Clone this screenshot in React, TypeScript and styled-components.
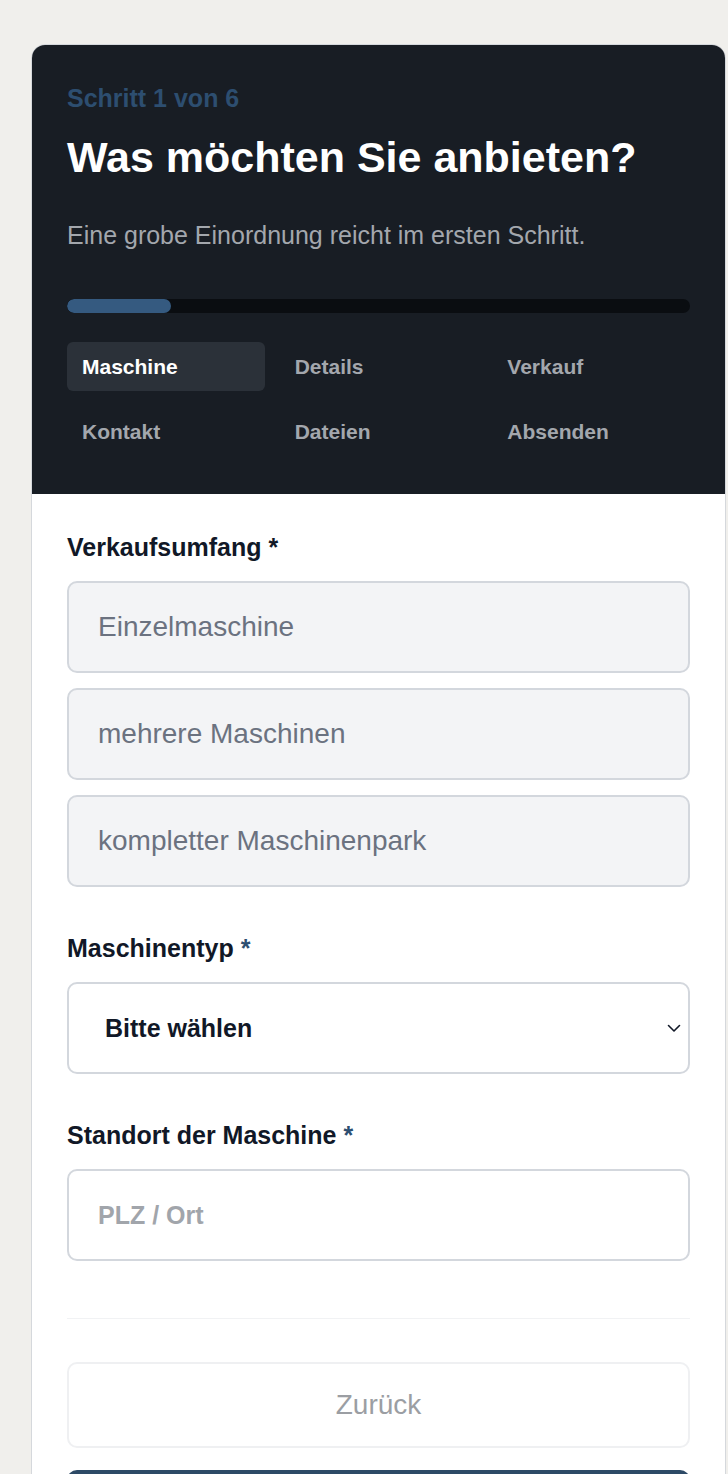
import * as React from 'react';
import styled, { createGlobalStyle } from 'styled-components';

const GlobalStyle = createGlobalStyle`
  html, body {
    margin: 0;
    padding: 0;
    background: #f0efec;
    font-family: "Liberation Sans", Arial, sans-serif;
  }
  * { box-sizing: border-box; }
`;

const steps = ['Maschine', 'Details', 'Verkauf', 'Kontakt', 'Dateien', 'Absenden'];
const scopes = ['Einzelmaschine', 'mehrere Maschinen', 'kompletter Maschinenpark'];

export default function App() {
  return (
    <>
      <GlobalStyle />
      <Page>
        <Card>
          <Header>
            <StepLabel>Schritt 1 von 6</StepLabel>
            <Title>Was möchten Sie anbieten?</Title>
            <Subtitle>Eine grobe Einordnung reicht im ersten Schritt.</Subtitle>
            <Track>
              <Fill style={{ width: `${(1 / 6) * 100}%` }} />
            </Track>
            <Tabs>
              {steps.map((s, i) => (
                <Tab key={s} active={i === 0}>
                  {s}
                </Tab>
              ))}
            </Tabs>
          </Header>

          <Body>
            <Field>
              <Label>Verkaufsumfang *</Label>
              <Options>
                {scopes.map(s => (
                  <Option key={s}>{s}</Option>
                ))}
              </Options>
            </Field>

            <Field>
              <Label>
                Maschinentyp <Req>*</Req>
              </Label>
              <Select>
                <span>Bitte wählen</span>
                <svg width="14" height="9" viewBox="0 0 14 9" fill="none">
                  <path d="M1.5 1.5l5.5 5.5 5.5-5.5" stroke="#111827" strokeWidth="1.6" strokeLinecap="round" strokeLinejoin="round" />
                </svg>
              </Select>
            </Field>

            <Field>
              <Label>
                Standort der Maschine <Req>*</Req>
              </Label>
              <Input placeholder="PLZ / Ort" />
            </Field>

            <Divider />

            <Footer>
              <BackButton>Zurück</BackButton>
              <NextButton />
            </Footer>
          </Body>
        </Card>
      </Page>
    </>
  );
}

const Page = styled.div`
  padding: 44px 2px 0 31px;
  height: 1474px;
  overflow: hidden;
`;

const Card = styled.div`
  background: #ffffff;
  border: 1px solid #d5d8dc;
  border-radius: 14px;
  overflow: hidden;
  width: 695px;
`;

const Header = styled.div`
  background: #181d24;
  padding: 38px 35px 38px;
`;

const StepLabel = styled.div`
  color: #2d4e70;
  font-size: 25px;
  font-weight: 700;
  line-height: 30px;
`;

const Title = styled.h1`
  margin: 18px 0 0;
  color: #ffffff;
  font-size: 43px;
  font-weight: 700;
  line-height: 52px;
`;

const Subtitle = styled.p`
  margin: 37px 0 0;
  color: #a3a7ad;
  font-size: 25px;
  line-height: 30px;
`;

const Track = styled.div`
  margin-top: 49px;
  height: 14px;
  background: #0a0d11;
  border-radius: 99px;
  overflow: hidden;
`;

const Fill = styled.div`
  height: 100%;
  background: #355a80;
  border-radius: 99px;
`;

const Tabs = styled.div`
  margin-top: 29px;
  display: grid;
  grid-template-columns: repeat(3, 1fr);
  column-gap: 15px;
  row-gap: 16px;
`;

const Tab = styled.div<{ active?: boolean }>`
  height: 49px;
  display: flex;
  align-items: center;
  padding: 0 15px;
  border-radius: 6px;
  font-size: 21px;
  font-weight: 700;
  color: ${p => (p.active ? '#ffffff' : '#a3a7ad')};
  background: ${p => (p.active ? '#2b3139' : 'transparent')};
`;

const Body = styled.div`
  padding: 38px 35px 0;
`;

const Field = styled.div`
  margin-bottom: 46px;
`;

const Label = styled.div`
  color: #111827;
  font-size: 25px;
  font-weight: 700;
  line-height: 30px;
  margin-bottom: 19px;
`;

const Req = styled.span`
  color: #2d4e70;
`;

const Options = styled.div`
  display: flex;
  flex-direction: column;
  gap: 15px;
`;

const Option = styled.div`
  height: 92px;
  display: flex;
  align-items: center;
  padding: 0 29px;
  background: #f3f4f6;
  border: 2px solid #d3d7dd;
  border-radius: 10px;
  color: #6b7280;
  font-size: 28px;
`;

const Select = styled.div`
  height: 92px;
  display: flex;
  align-items: center;
  justify-content: space-between;
  padding: 0 7px 0 36px;
  background: #ffffff;
  border: 2px solid #d3d7dd;
  border-radius: 10px;
  color: #111827;
  font-size: 25px;
  font-weight: 700;
`;

const Input = styled.input`
  display: block;
  width: 100%;
  height: 92px;
  padding: 0 29px;
  background: #ffffff;
  border: 2px solid #d3d7dd;
  border-radius: 10px;
  font-family: "Liberation Sans", Arial, sans-serif;
  font-size: 25px;
  font-weight: 700;
  outline: none;

  &::placeholder {
    color: #a1a5ab;
  }
`;

const Divider = styled.hr`
  margin: 57px 0 0;
  border: none;
  border-top: 1px solid #f1f2f4;
`;

const Footer = styled.div`
  padding-top: 43px;
  display: flex;
  flex-direction: column;
  gap: 22px;
`;

const BackButton = styled.button`
  height: 86px;
  background: #ffffff;
  border: 2px solid #eff0f2;
  border-radius: 10px;
  color: #9b9ea3;
  font-family: "Liberation Sans", Arial, sans-serif;
  font-size: 28px;
`;

const NextButton = styled.button`
  height: 86px;
  background: #2d4a66;
  border: none;
  border-radius: 10px;
`;
